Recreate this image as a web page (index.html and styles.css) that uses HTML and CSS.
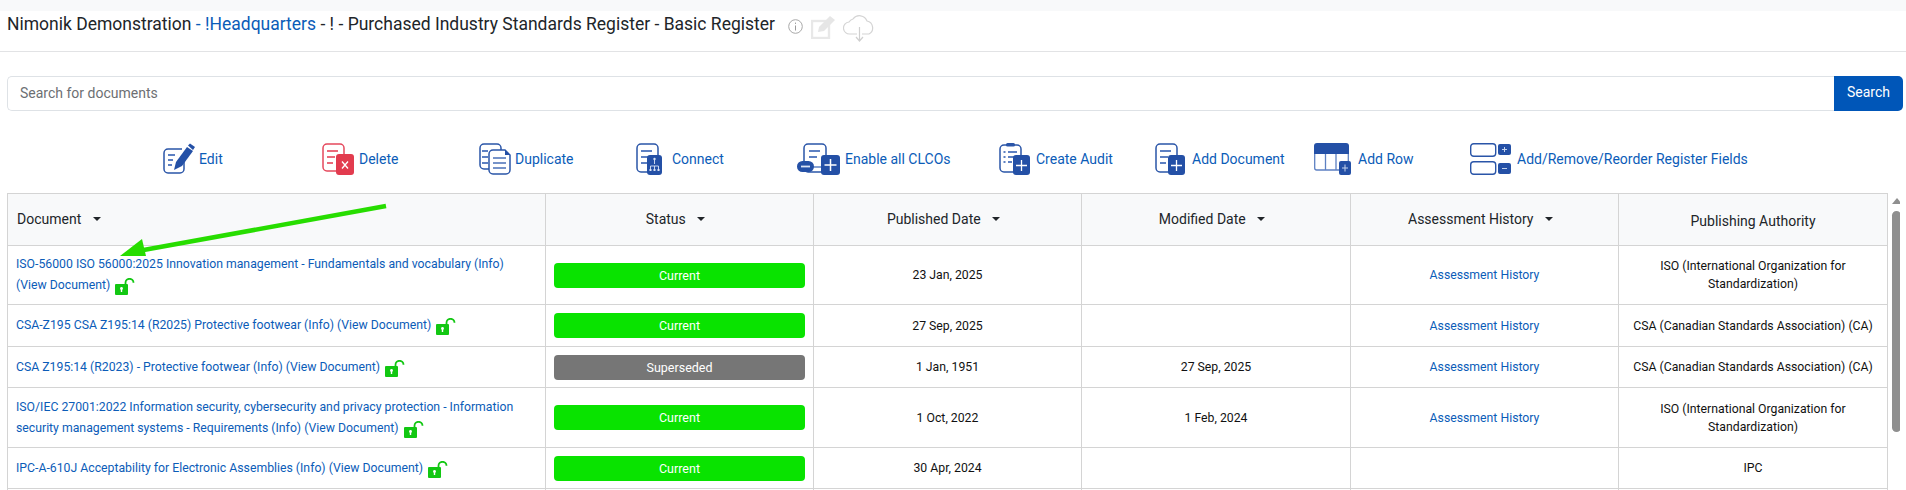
FILE: index.html
```html
<!DOCTYPE html>
<html lang="en">
<head>
<meta charset="utf-8">
<title>Basic Register</title>
<link rel="stylesheet" href="styles.css">
</head>
<body>
<svg width="0" height="0" class="defs">
  <symbol id="lock" viewBox="0 0 20 17">
    <rect x="0" y="6" width="13" height="11" rx="1" fill="#12c712"/>
    <path d="M10.500 6V4.800a4 4 0 0 1 8 0" fill="none" stroke="#12c712" stroke-width="1.800"/>
    <circle cx="6.500" cy="10.500" r="1.400" fill="#fff"/><rect x="5.800" y="10.500" width="1.400" height="3.500" fill="#fff"/>
  </symbol>
  <symbol id="doc" viewBox="0 0 32 32">
    <rect x="1" y="1" width="21" height="28" rx="4" fill="#fff" stroke="#2a55a8" stroke-width="1.500"/>
    <path d="M5 8h11M5 14h8M5 20h6" stroke="#5d80c2" stroke-width="1.800"/>
  </symbol>
</svg>
<div class="topband"></div>
<header class="titlebar">
  <h1 class="title">Nimonik Demonstration <a class="crumb">- !Headquarters</a> - ! - Purchased Industry Standards Register - Basic Register</h1>
  <div class="title-icons">
    <svg class="i-info" width="15" height="15" viewBox="0 0 15 15"><circle cx="7.500" cy="7.500" r="6.800" fill="none" stroke="#a8a8a8"/><path d="M7.500 6.500v5M7.500 3.600v1.300" stroke="#999"/></svg>
    <svg class="i-note" width="25" height="24" viewBox="0 0 25 24"><rect x="1" y="6" width="17" height="17" fill="none" stroke="#e8e8e8" stroke-width="2.400"/><path d="M7 17l1-5L19 1l5 4-11 11z" fill="#e6e6e6"/></svg>
    <svg class="i-cloud" width="33" height="28" viewBox="0 0 33 28"><path d="M10 20H7a6 6 0 0 1-1-12 7 7 0 0 1 4-3 8 8 0 0 1 14 2 7 7 0 0 1 2 13h-3M10 20h4M19 20h4" fill="none" stroke="#d4d4d4" stroke-width="1.200"/><path d="M16.500 13v13M13 23l3.500 4 3.500-4" fill="none" stroke="#cfcfcf" stroke-width="1.200"/></svg>
  </div>
</header>

<form class="search">
  <div class="search-input">Search for documents</div>
  <div class="search-btn">Search</div>
</form>

<nav class="toolbar">
  <a class="tool tight"><svg width="32" height="32" viewBox="0 0 32 32"><path d="M21 13v13a4 4 0 0 1-4 4H5a4 4 0 0 1-4-4V10a4 4 0 0 1 4-4h14" fill="#fff" stroke="#2a55a8" stroke-width="1.500"/><path d="M5 12h7M5 17h5M5 22h4" stroke="#5d80c2" stroke-width="1.800"/><path d="M11 27l2-8L24 4l6 4-11 15z" fill="#2450a6"/><path d="M25 2.500l2-2 5 3.500-2 3z" fill="#2450a6"/></svg><span>Edit</span></a>
  <a class="tool"><svg width="32" height="32" viewBox="0 0 32 32"><rect x="1" y="1" width="21" height="27" rx="4" fill="#fff" stroke="#e5485c" stroke-width="1.500"/><path d="M5 8h11M5 14h8M5 20h6" stroke="#ea6a7a" stroke-width="1.800"/><rect x="14" y="11" width="18" height="21" rx="3" fill="#e23b4e"/><path d="M20 18.500l6 7M26 18.500l-6 7" stroke="#fff" stroke-width="1.300"/></svg><span>Delete</span></a>
  <a class="tool tight"><svg width="32" height="32" viewBox="0 0 32 32"><rect x="1" y="1" width="21" height="25" rx="4" fill="#fff" stroke="#2a55a8" stroke-width="1.500"/><path d="M3 8h6M3 14h6M3 20h6" stroke="#5d80c2" stroke-width="1.800"/><path d="M14 7h12l5 5v15a4 4 0 0 1-4 4H14a4 4 0 0 1-4-4V11a4 4 0 0 1 4-4z" fill="#fff" stroke="#2a55a8" stroke-width="1.500"/><path d="M14 15h13M14 20h13M14 25h13" stroke="#4a70b8" stroke-width="1.500"/><path d="M26 7l5 5h-5z" fill="#2450a6"/></svg><span>Duplicate</span></a>
  <a class="tool tight"><svg width="32" height="32" viewBox="0 0 32 32"><use href="#doc" width="32" height="32"/><rect x="11" y="12" width="15" height="20" rx="3" fill="#2450a6"/><path d="M18.500 16v5M14.500 26v-3h8v3M18.500 23v3" fill="none" stroke="#dbe4f5" stroke-width=".9"/><circle cx="18.500" cy="16" r="1.200" fill="#dbe4f5"/><path d="M13.500 26h2v2h-2zM17.500 26h2v2h-2zM21.500 26h2v2h-2z" fill="#dbe4f5"/></svg><span>Connect</span></a>
  <a class="tool"><svg width="43" height="32" viewBox="0 0 43 32"><rect x="7" y="1" width="22" height="28" rx="4" fill="#fff" stroke="#2a55a8" stroke-width="1.500"/><path d="M12 8h11M12 14h8" stroke="#5d80c2" stroke-width="1.800"/><path d="M15 24h9" stroke="#5d80c2" stroke-width="1.500"/><rect x="0" y="18" width="17" height="11" rx="5.500" fill="#2450a6"/><path d="M4 23.500h9" stroke="#dbe4f5" stroke-width="1.800"/><rect x="24" y="12" width="19" height="20" rx="3" fill="#2450a6"/><path d="M33.500 16v12M27.500 22h12" stroke="#fff" stroke-width="1.500"/></svg><span>Enable all CLCOs</span></a>
  <a class="tool"><svg width="32" height="32" viewBox="0 0 32 32"><rect x="1" y="2" width="21" height="27" rx="4" fill="#fff" stroke="#2a55a8" stroke-width="1.500"/><rect x="7" y="0" width="9" height="3.500" rx="1.500" fill="#2a55a8"/><path d="M4.500 9h2M4.500 14h2M4.500 19h2M9 9h9M9 14h7M9 19h4" stroke="#5d80c2" stroke-width="1.800"/><rect x="14" y="12" width="17" height="20" rx="3" fill="#2450a6"/><path d="M22.500 17v11M17 22.500h11" stroke="#fff" stroke-width="1.300"/></svg><span>Create Audit</span></a>
  <a class="tool"><svg width="32" height="32" viewBox="0 0 32 32"><use href="#doc" width="32" height="32"/><rect x="13" y="12" width="17" height="20" rx="3" fill="#2450a6"/><path d="M21.500 17v11M16 22.500h11" stroke="#fff" stroke-width="1.300"/></svg><span>Add Document</span></a>
  <a class="tool airy"><svg width="37" height="32" viewBox="0 0 37 32"><path d="M0 3a3 3 0 0 1 3-3h29a3 3 0 0 1 3 3v8H0z" fill="#2450a6"/><path d="M.7 11v14a2 2 0 0 0 2 2h26M34.300 11v8M11.500 11v16M22 11v16" fill="none" stroke="#5d80c2" stroke-width="1.300"/><rect x="25" y="18" width="12" height="14" rx="2" fill="#2450a6"/><path d="M31 21.500v7M28 25h6" stroke="#c4d2ec" stroke-width="1"/></svg><span>Add Row</span></a>
  <a class="tool"><svg width="42" height="32" viewBox="0 0 42 32"><rect x=".7" y=".7" width="25" height="12.600" rx="3" fill="#fff" stroke="#2a55a8" stroke-width="1.400"/><rect x=".7" y="18.700" width="25" height="12.600" rx="3" fill="#fff" stroke="#2a55a8" stroke-width="1.400"/><rect x="28" y="1" width="13" height="11" rx="2" fill="#2450a6"/><path d="M34.500 4v5M32 6.500h5" stroke="#c4d2ec"/><rect x="28" y="20" width="13" height="11" rx="2" fill="#2450a6"/><path d="M32 25.500h5" stroke="#c4d2ec"/></svg><span>Add/Remove/Reorder Register Fields</span></a>
</nav>

<div class="table-area">
  <table class="register">
    <colgroup>
      <col class="c-doc"><col class="c-status"><col class="c-pub"><col class="c-mod"><col class="c-hist"><col class="c-auth">
    </colgroup>
    <thead>
      <tr class="h-head">
        <th class="left">Document <i class="caret"></i></th>
        <th>Status <i class="caret"></i></th>
        <th>Published Date <i class="caret"></i></th>
        <th>Modified Date <i class="caret"></i></th>
        <th>Assessment History <i class="caret"></i></th>
        <th class="plain">Publishing Authority</th>
      </tr>
    </thead>
    <tbody>
      <tr class="h-r1">
        <td class="left"><a class="doc">ISO-56000 ISO 56000:2025 Innovation management - Fundamentals and vocabulary (Info) (View Document) <svg class="lock"><use href="#lock"/></svg></a></td>
        <td><div class="badge ok">Current</div></td>
        <td>23 Jan, 2025</td>
        <td></td>
        <td><a class="link">Assessment History</a></td>
        <td>ISO (International Organization for Standardization)</td>
      </tr>
      <tr class="h-r2">
        <td class="left"><a class="doc">CSA-Z195 CSA Z195:14 (R2025) Protective footwear (Info) (View Document) <svg class="lock"><use href="#lock"/></svg></a></td>
        <td><div class="badge ok">Current</div></td>
        <td>27 Sep, 2025</td>
        <td></td>
        <td><a class="link">Assessment History</a></td>
        <td>CSA (Canadian Standards Association) (CA)</td>
      </tr>
      <tr class="h-r3">
        <td class="left"><a class="doc">CSA Z195:14 (R2023) - Protective footwear (Info) (View Document) <svg class="lock"><use href="#lock"/></svg></a></td>
        <td><div class="badge old">Superseded</div></td>
        <td>1 Jan, 1951</td>
        <td>27 Sep, 2025</td>
        <td><a class="link">Assessment History</a></td>
        <td>CSA (Canadian Standards Association) (CA)</td>
      </tr>
      <tr class="h-r4">
        <td class="left"><a class="doc">ISO/IEC 27001:2022 Information security, cybersecurity and privacy protection - Information security management systems - Requirements (Info) (View Document) <svg class="lock"><use href="#lock"/></svg></a></td>
        <td><div class="badge ok">Current</div></td>
        <td>1 Oct, 2022</td>
        <td>1 Feb, 2024</td>
        <td><a class="link">Assessment History</a></td>
        <td>ISO (International Organization for Standardization)</td>
      </tr>
      <tr class="h-r5">
        <td class="left"><a class="doc">IPC-A-610J Acceptability for Electronic Assemblies (Info) (View Document) <svg class="lock"><use href="#lock"/></svg></a></td>
        <td><div class="badge ok">Current</div></td>
        <td>30 Apr, 2024</td>
        <td></td>
        <td></td>
        <td>IPC</td>
      </tr>
      <tr class="h-end"><td></td><td></td><td></td><td></td><td></td><td></td></tr>
    </tbody>
  </table>
  <div class="scrollbar"><i class="sb-arrow"></i><i class="sb-thumb"></i></div>
</div>

<svg class="arrow" width="280" height="65" viewBox="0 0 280 65"><path d="M270 4L22 49" stroke="#27dd00" stroke-width="4.500"/><path d="M4 54L26 37l4 17z" fill="#27dd00"/></svg>
</body>
</html>
```
FILE: styles.css
```css
* { box-sizing: border-box; }
html, body { margin: 0; height: 490px; overflow: hidden; background: #fff; }
body { position: relative; font-family: Roboto, "Liberation Sans", sans-serif; color: #111; }
.defs { position: absolute; }
a { text-decoration: none; }

.topband { height: 11px; background: #f8f9fa; }

.titlebar { height: 41px; border-bottom: 1px solid #e2e3e5; padding-left: 7px; display: flex; align-items: flex-start; }
.title { margin: 3px 0 0; font-size: 17.5px; line-height: 20px; font-weight: 400; color: #212529; white-space: nowrap; }
.crumb { color: #0b5cb8; }
.title-icons { display: flex; align-items: flex-start; margin-left: 13px; }
.i-info { margin-top: 8px; }
.i-note { margin: 4px 0 0 8px; }
.i-cloud { margin: 3px 0 0 7px; }

.search { display: flex; height: 35px; margin: 24px 3px 0 7px; }
.search-input { flex: 1; border: 1px solid #dee2e6; border-right: 0; border-radius: 5px 0 0 5px; padding: 0 12px; font-size: 14px; line-height: 32px; color: #6c6f73; }
.search-btn { width: 69px; background: #0056b8; color: #fff; border-radius: 0 5px 5px 0; text-align: center; font-size: 14px; line-height: 33px; }

.toolbar { display: grid; grid-template-columns: 159px 157px 157px 161px 202px 156px 159px 156px auto; margin-top: 32px; padding-left: 163px; height: 32px; }
.tool { display: flex; align-items: center; gap: 5px; font-size: 14px; color: #0b5cb8; white-space: nowrap; }
.tool.tight { gap: 4px; }
.tool.airy { gap: 7px; }
.tool svg { flex: none; display: block; }

.table-area { display: flex; height: 297px; overflow: hidden; margin: 18px 6px 0 7px; align-items: flex-start; }
.register { table-layout: fixed; border-collapse: collapse; width: 1880px; flex: none; }
.c-doc { width: 538px; }
.c-status, .c-pub, .c-hist { width: 268px; }
.c-mod, .c-auth { width: 269px; }
.register th, .register td { border: 1px solid #d4d4d4; padding: 0 8px; text-align: center; vertical-align: middle; }
.register th { background: #f8f9fa; font-size: 14px; font-weight: 400; color: #212529; padding-bottom: 2px; }
.register th.plain { padding-bottom: 0; padding-top: 2px; }
.register th.left { padding-left: 9px; }
.register td { font-size: 12.25px; line-height: 18px; color: #111; }
.register .left { text-align: left; }
.register td.left { line-height: 21px; padding-right: 24px; }
.h-head { height: 52px; }
.h-r1 { height: 59px; }
.h-r2 { height: 42px; }
.h-r3 { height: 41px; }
.h-r4 { height: 60px; }
.h-r5 { height: 41px; }
.register .h-end td { height: 6px; line-height: 0; }
.caret { display: inline-block; margin: 0 8px 0 8px; border: 4px solid transparent; border-top-color: #212529; border-bottom: 0; vertical-align: middle; position: relative; top: -1px; }
.doc, .link { color: #0b5cb8; }
.lock { width: 20px; height: 17px; vertical-align: -6px; margin-left: 2px; }
.badge { height: 25px; line-height: 25px; border-radius: 4px; color: #fff; font-size: 12.5px; }
.badge.ok { background: #09e300; }
.badge.old { background: #767676; }

.scrollbar { margin-left: 4px; width: 9px; height: 240px; flex: none; display: flex; flex-direction: column; align-items: center; padding-top: 5px; }
.sb-arrow { border: 5px solid transparent; border-bottom: 6px solid #8f8f8f; border-top: 0; }
.sb-thumb { width: 9px; height: 221px; margin-top: 7px; border-radius: 5px; background: #8f8f8f; }

.arrow { position: absolute; left: 116px; top: 202px; }
```
